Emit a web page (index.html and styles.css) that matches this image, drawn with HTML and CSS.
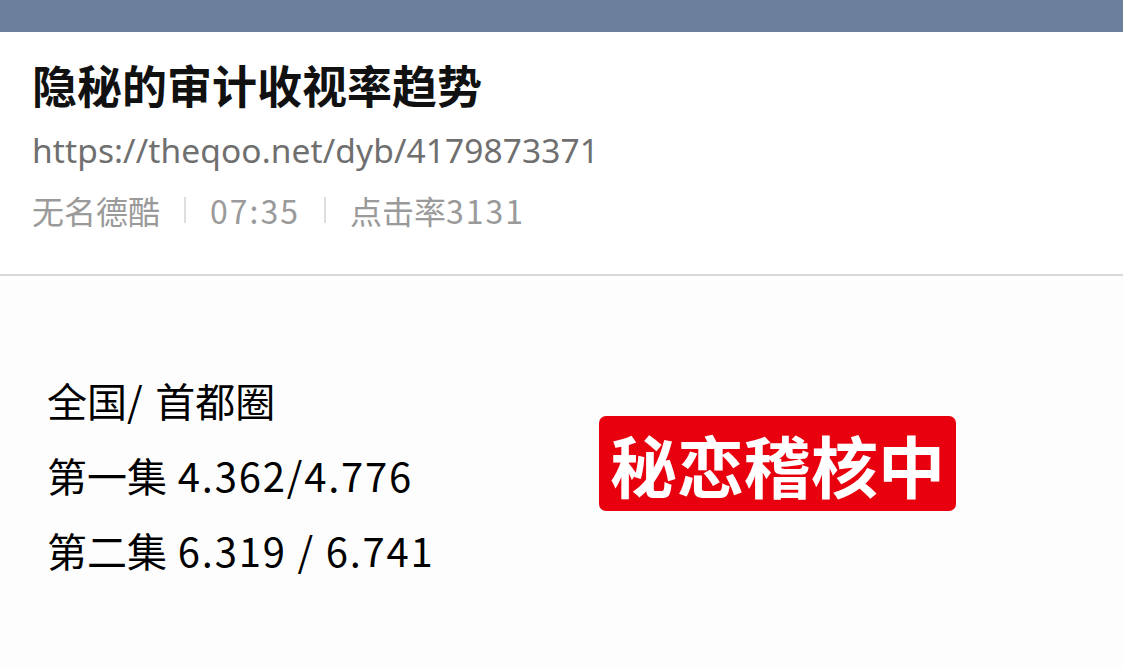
FILE: index.html
```html
<!DOCTYPE html>
<html lang="zh">
<head>
<meta charset="utf-8">
<link rel="stylesheet" href="styles.css">
</head>
<body>
<div class="topbar"></div>
<header class="header">
  <h1 class="title">隐秘的审计收视率趋势</h1>
  <div class="url">https://theqoo.net/dyb/4179873371</div>
  <div class="meta">
    <span>无名德酷</span><span class="sep"></span><span class="num">07:35</span><span class="sep"></span><span>点击率<span class="num">3131</span></span>
  </div>
</header>
<main class="content">
  <div class="ratings">
    <p class="line">全国<span class="num">/ </span>首都圈</p>
    <p class="line">第一集<span class="num"> 4.362/4.776</span></p>
    <p class="line">第二集<span class="num"> 6.319 / 6.741</span></p>
  </div>
  <div class="badge">秘恋稽核中</div>
</main>
</body>
</html>
```

FILE: styles.css
```css
html, body {
  margin: 0;
  padding: 0;
  background: #fdfdfd;
  font-family: "Noto Sans CJK SC", "Noto Sans", sans-serif;
}
.topbar {
  height: 32px;
  background: #6b809d;
}
.header {
  padding: 23px 32px 0 32px;
  height: 219px;
  border-bottom: 2px solid #d9d9d9;
  background: #ffffff;
}
.title {
  margin: 0;
  font-size: 45px;
  font-weight: 700;
  line-height: 60px;
  color: #111;
}
.url {
  margin-top: 5px;
  font-family: "Noto Sans", "Open Sans", sans-serif;
  font-size: 33.5px;
  letter-spacing: 0.1px;
  line-height: 60px;
  color: #6f6f6f;
}
.meta {
  display: flex;
  align-items: center;
  font-size: 32px;
  line-height: 60px;
  color: #9a9a9a;
}
.meta .num {
  letter-spacing: 2px;
}
.meta .sep {
  width: 2px;
  height: 26px;
  background: #dedede;
  margin: 0 24px;
}
.content {
  display: flex;
  align-items: flex-start;
  padding: 87px 0 0 47px;
  height: 300px;
}
.ratings {
  width: 552px;
}
.line {
  margin: 0;
  font-size: 40px;
  line-height: 75px;
  color: #000;
}
.line .num {
  letter-spacing: 1.8px;
}
.badge {
  margin-top: 53px;
  width: 357px;
  height: 95px;
  background: #e8000e;
  border-radius: 7px;
  color: #fff;
  font-weight: 600;
  font-size: 67px;
  line-height: 95px;
  text-align: center;
}
```
